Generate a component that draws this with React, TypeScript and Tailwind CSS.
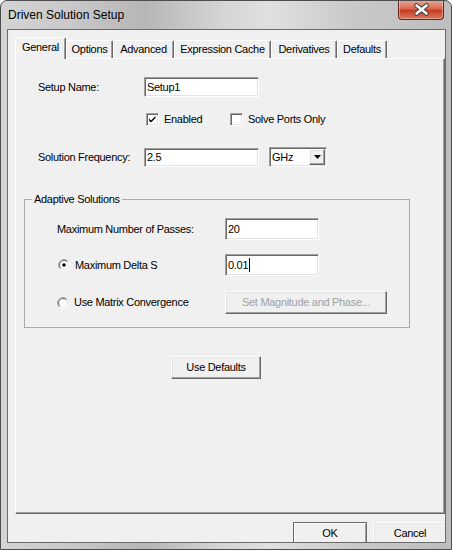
import { useId, type ReactNode } from "react";

const sunken =
  "border border-[#a0a0a0] border-r-white border-b-white shadow-[inset_1px_1px_0_#696969,inset_-1px_-1px_0_#e3e3e3] bg-white";
const raised =
  "border border-white border-r-[#696969] border-b-[#696969] shadow-[inset_-1px_-1px_0_#a0a0a0,inset_1px_1px_0_#e3e3e3] bg-[#f0f0f0]";

function TextBox({ value, className, caret }: { value: string; className: string; caret?: boolean }) {
  return (
    <div className={`flex items-center pl-[2px] ${sunken} ${className}`}>
      <span className="leading-[13px]">{value}</span>
      {caret && <span className="ml-[1px] h-[14px] w-[1px] bg-black" />}
    </div>
  );
}

function CheckBox({ checked }: { checked?: boolean }) {
  return (
    <div className={`relative size-[13px] shrink-0 ${sunken}`}>
      {checked && (
        <svg className="absolute left-0 top-0" width="11" height="11" viewBox="0 0 11 11">
          <path d="M2 4.5 L4 6.5 L8.5 2 L8.5 4 L4 8.5 L2 6.5 Z" fill="#000" />
        </svg>
      )}
    </div>
  );
}

function Radio({ checked }: { checked?: boolean }) {
  const id = useId().replace(/:/g, "");
  return (
    <svg width="12" height="12" viewBox="0 0 12 12" className="shrink-0">
      <defs>
        <linearGradient id={`o${id}`} x1="0" y1="0" x2="1" y2="1">
          <stop offset="0.45" stopColor="#a0a0a0" />
          <stop offset="0.55" stopColor="#ffffff" />
        </linearGradient>
        <linearGradient id={`i${id}`} x1="0" y1="0" x2="1" y2="1">
          <stop offset="0.45" stopColor="#696969" />
          <stop offset="0.55" stopColor="#e3e3e3" />
        </linearGradient>
      </defs>
      <circle cx="6" cy="6" r="5.5" fill="none" stroke={`url(#o${id})`} />
      <circle cx="6" cy="6" r="4.5" fill="#fff" stroke={`url(#i${id})`} />
      {checked && <circle cx="6" cy="6" r="1.8" fill="#000" />}
    </svg>
  );
}

function Button({ children, className, disabled }: { children: ReactNode; className: string; disabled?: boolean }) {
  return (
    <div
      className={`flex shrink-0 items-center justify-center leading-[13px] ${raised} ${
        disabled ? "text-[#a0a0a0]" : "text-black"
      } ${className}`}
    >
      {children}
    </div>
  );
}

const tabs = [
  { label: "Options", w: "w-[47px]" },
  { label: "Advanced", w: "w-[61px]" },
  { label: "Expression Cache", w: "w-[97px]" },
  { label: "Derivatives", w: "w-[66px]" },
  { label: "Defaults", w: "w-[50px]" },
];

export default function App() {
  return (
    <div className="flex h-[550px] w-[452px] flex-col overflow-hidden rounded-t-[7px] border border-[#4d4d4d] bg-[linear-gradient(90deg,#d4d4d4_0%,#c8c8c8_16%,#b6b6b6_32%,#d6d6d6_50%,#e0e0e0_60%,#c9c9c9_78%,#bdbdbd_100%)] font-['Liberation_Sans',Arial,sans-serif] text-[11px] tracking-[-0.3px] text-black">
      {/* title bar */}
      <div className="flex h-[28px] shrink-0 items-start">
        <div className="pl-[7px] pt-[7px] text-[12px] leading-[14px] tracking-normal">Driven Solution Setup</div>
        <div className="-mt-[1px] ml-auto mr-[7px] h-[20px] w-[46px] rounded-b-[4px] border border-t-0 border-[#6b2417] bg-[linear-gradient(#e9aa9c,#d9694f_45%,#c63d22_55%,#d9785c)] shadow-[inset_0_0_0_1px_rgba(255,255,255,0.35)]">
          <svg width="44" height="19" viewBox="0 0 44 19">
            <path d="M17.5 5.5 L27.5 13.5 M27.5 5.5 L17.5 13.5" stroke="#3b3b3b" strokeWidth="4.6" strokeLinecap="round" />
            <path d="M17.5 5.5 L27.5 13.5 M27.5 5.5 L17.5 13.5" stroke="#fff" strokeWidth="2.6" strokeLinecap="round" />
          </svg>
        </div>
      </div>

      {/* client area */}
      <div className="mb-[6px] ml-[6px] mr-[5px] flex flex-1 flex-col overflow-hidden border border-[#6b6b6b] bg-[#f0f0f0] pl-[7px] pt-[7px]">
        {/* tab strip */}
        <div className="flex h-[21px] shrink-0 items-end">
          <div className="relative z-10 -mb-[1px] flex h-[22px] w-[51px] items-start justify-center rounded-t-[2px] border border-b-0 border-white border-r-[#696969] bg-[#f0f0f0] pt-[3px] leading-[13px] shadow-[inset_-1px_0_0_#a0a0a0]">
            General
          </div>
          {tabs.map((t) => (
            <div
              key={t.label}
              className={`flex h-[18px] items-center justify-center rounded-t-[2px] border border-b-0 border-white border-r-[#696969] leading-[13px] shadow-[inset_-1px_0_0_#a0a0a0] ${t.w}`}
            >
              {t.label}
            </div>
          ))}
        </div>

        {/* tab page */}
        <div className="flex h-[456px] shrink-0 flex-col border border-white border-r-[#696969] border-b-[#696969] px-[8px] pt-[18px] shadow-[inset_-1px_-1px_0_#a0a0a0]">
          <div className="flex h-[20px] items-center pl-[14px]">
            <span className="w-[106px] leading-[13px]">Setup Name:</span>
            <TextBox value="Setup1" className="h-[20px] w-[115px]" />
          </div>

          <div className="mt-[16px] flex h-[13px] items-center pl-[122px]">
            <div className="flex w-[84px] items-center">
              <CheckBox checked />
              <span className="ml-[5px] leading-[13px]">Enabled</span>
            </div>
            <CheckBox />
            <span className="ml-[5px] leading-[13px]">Solve Ports Only</span>
          </div>

          <div className="mt-[21px] flex h-[20px] items-center pl-[14px]">
            <span className="w-[106px] leading-[13px]">Solution Frequency:</span>
            <TextBox value="2.5" className="h-[19px] w-[115px]" />
            <div className={`ml-[10px] flex h-[20px] w-[58px] items-center pl-[2px] pr-[1px] ${sunken}`}>
              <span className="leading-[13px]">GHz</span>
              <div className={`ml-auto flex h-[16px] w-[16px] items-center justify-center ${raised}`}>
                <svg width="7" height="4" viewBox="0 0 7 4">
                  <path d="M0 0 H7 L3.5 4 Z" fill="#000" />
                </svg>
              </div>
            </div>
          </div>

          {/* group box */}
          <div className="relative mt-[32px] w-[386px] border border-[#a9a9a9] pb-[13px] pl-[32px] pt-[18px]">
            <span className="absolute -top-[7px] left-[7px] bg-[#f0f0f0] px-[2px] leading-[13px]">Adaptive Solutions</span>
            <div className="flex h-[22px] items-center">
              <span className="w-[168px] leading-[13px]">Maximum Number of Passes:</span>
              <TextBox value="20" className="h-[22px] w-[94px]" />
            </div>
            <div className="mt-[14px] flex h-[22px] items-center">
              <div className="flex w-[168px] items-center">
                <span className="ml-[1px] flex">
                  <Radio checked />
                </span>
                <span className="ml-[5px] leading-[13px]">Maximum Delta S</span>
              </div>
              <TextBox value="0.01" caret className="h-[22px] w-[94px]" />
            </div>
            <div className="mt-[15px] flex h-[23px] items-center">
              <div className="flex w-[168px] items-center">
                <Radio />
                <span className="ml-[5px] leading-[13px]">Use Matrix Convergence</span>
              </div>
              <Button disabled className="h-[23px] w-[162px]">
                Set Magnitude and Phase...
              </Button>
            </div>
          </div>

          <Button className="ml-[147px] mt-[28px] h-[23px] w-[90px]">Use Defaults</Button>
        </div>

        {/* dialog buttons */}
        <div className="-mr-[2px] mt-[8px] flex shrink-0 justify-end gap-[6px]">
          <div className="flex h-[23px] w-[74px] items-center justify-center border border-[#696969] bg-[#f0f0f0] leading-[13px] shadow-[inset_1px_1px_0_#fff,inset_-1px_-1px_0_#a0a0a0]">
            OK
          </div>
          <Button className="h-[23px] w-[74px]">Cancel</Button>
        </div>
      </div>
    </div>
  );
}
